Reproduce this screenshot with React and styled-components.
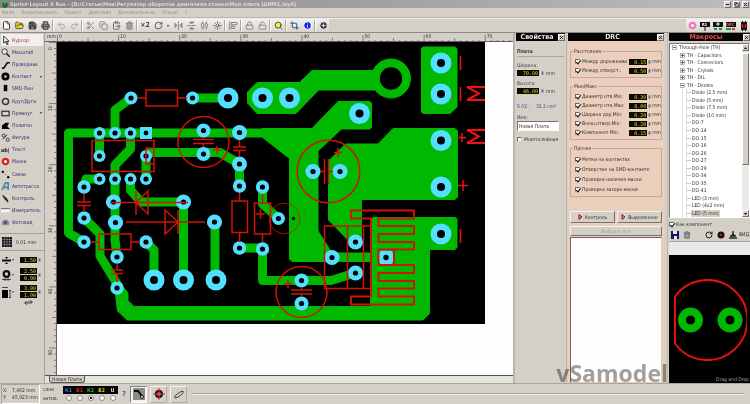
import React, { useState } from 'react';
import styled, { createGlobalStyle } from 'styled-components';
import {
  File, FolderOpen, Save, Printer, Undo2, Redo2, Scissors, Copy, ClipboardPaste, Trash2,
  RotateCw, FlipHorizontal2, FlipVertical2, AlignHorizontalDistributeCenter, Sun, AlignStartVertical,
  Lock, Unlock, Search, Crop, Info, CirclePlus, Minus, X,
} from 'lucide-react';

const GlobalStyle = createGlobalStyle`
  * {
    box-sizing: border-box;
  }
  body {
    margin: 0;
    background: #d4d0c8;
    color: #33302e;
    font-family: 'DejaVu Sans Condensed', 'DejaVu Sans', sans-serif;
    font-size: 5px;
    line-height: 7px;
  }
  button, input {
    font: inherit;
    color: inherit;
    margin: 0;
    padding: 0;
  }
  svg {
    display: block;
    flex: none;
  }
`;

const Window = styled.div`
  display: flex;
  flex-direction: column;
  min-height: 100vh;
  background: #d4d0c8;
`;

const TitleBar = styled.header`
  display: flex;
  align-items: center;
  gap: 2px;
  height: 8px;
  padding: 0 1px 0 2px;
  background: linear-gradient(90deg, #858585, #bdbdbd);
  color: #dedbd5;
  font-weight: bold;
`;

const Title = styled.h1`
  flex: 1;
  margin: 0;
  font-family: 'DejaVu Sans', sans-serif;
  font-size: 5px;
  white-space: nowrap;
  overflow: hidden;
`;

const SmallButton = styled.button`
  display: flex;
  align-items: center;
  justify-content: center;
  width: 7px;
  height: 7px;
  border: 1px solid;
  border-color: #fff #706d68 #706d68 #fff;
  background: #d4d0c8;
  color: #111;
`;

const MenuBar = styled.nav`
  display: flex;
  align-items: center;
  gap: 7px;
  height: 10px;
  padding-left: 2px;
  border-bottom: 1px solid #bbb7ae;

  a {
    color: #918e88;
    text-decoration: none;
  }
`;

const ToolBar = styled.div`
  display: flex;
  align-items: center;
  justify-content: space-between;
  height: 15px;
  border-top: 1px solid #eeece8;
  border-bottom: 1px solid #8d8a84;
`;

const ToolGroup = styled.div`
  display: flex;
  align-items: center;
  gap: 1px;
  height: 13px;
  background: linear-gradient(#f2f1ee, #d8d4cd);
`;

const ToolButton = styled.button`
  display: flex;
  align-items: center;
  justify-content: center;
  width: ${(props) => (props.$narrow ? '6px' : '12px')};
  height: 12px;
  border: 0;
  background: none;
  color: ${(props) => props.$color || '#8b8883'};
  font-size: 7px;
  font-weight: bold;
`;

const ToolSeparator = styled.span`
  width: 2px;
  height: 11px;
  border-left: 1px solid #a9a59d;
  border-right: 1px solid #fff;
`;

const Workspace = styled.main`
  position: relative;
  display: grid;
  grid-template-columns: 45px minmax(0, 1fr) 52px 101px 83px;
  flex: 1;
`;

const SideBar = styled.aside`
  display: flex;
  flex-direction: column;
  border-right: 1px solid #a5a199;
`;

const ModeList = styled.div`
  display: grid;
  grid-auto-rows: 1fr;
  height: 196px;
  padding: 1px 1px 0;
`;

const ModeButton = styled.button`
  display: flex;
  align-items: center;
  gap: 2px;
  padding-left: 0;
  border: 0;
  background: ${(props) => (props.$active ? '#f1efec' : 'none')};
  color: ${(props) => (props.$active ? '#9b2424' : '#2a2a78')};
  text-align: left;

  span {
    flex: 1;
    white-space: nowrap;
  }
`;

const Arrow = styled.i`
  width: 0;
  margin-right: 1px;
  border: 1px solid transparent;
  border-top: 2px solid ${(props) => props.$color || '#222'};
  border-bottom: 0;
`;

const GridRow = styled.div`
  display: flex;
  align-items: center;
  gap: 4px;
  height: 18px;
  margin-top: 4px;
  padding-left: 2px;
  border-top: 1px solid #a5a199;
  border-bottom: 1px solid #a5a199;
`;

const SizeRow = styled.div`
  display: flex;
  align-items: center;
  gap: 1px;
  height: ${(props) => (props.$pair ? '17px' : '12px')};
  margin-top: ${(props) => (props.$pair ? '0' : '3px')};
  padding-left: 2px;
`;

const Stack = styled.div`
  display: flex;
  flex-direction: column;
  gap: 1px;
  margin-left: 4px;
`;

const Unit = styled.span`
  width: 3px;
  height: 4px;
  background: #64657c;
  border: 1px solid #a9a7a9;
`;

const NumberField = styled.input`
  width: ${(props) => props.$width || '17px'};
  height: 6px;
  padding-right: 1px;
  border: 0;
  background: #0b0b05;
  color: #dada28;
  font-family: 'DejaVu Sans Mono', monospace;
  font-size: 5px;
  line-height: 6px;
  text-align: right;
`;

const CanvasArea = styled.section`
  display: grid;
  grid-template-columns: 12px minmax(0, 1fr);
  grid-template-rows: 9px minmax(0, 1fr) 8px;
  overflow: hidden;
  border-right: 1px solid #b5b2ab;
`;

const RulerCorner = styled.span`
  padding-left: 2px;
  border-bottom: 1px solid #66645f;
`;

const RulerBox = styled.div`
  overflow: hidden;
  border-bottom: ${(props) => (props.$side ? '0' : '1px solid #66645f')};
  border-right: ${(props) => (props.$side ? '1px solid #66645f' : '0')};
`;

const Sheet = styled.div`
  overflow: hidden;
  background: #fefefe;
`;

const TabRow = styled.div`
  grid-column: 1 / 3;
  display: flex;
  padding-left: 4px;
  border-top: 1px solid #55534f;
  background: #e5e3de;
`;

const Tab = styled.button`
  height: 7px;
  padding: 0 2px;
  border: 1px solid #55534f;
  border-top: 0;
  border-radius: 0 0 3px 3px;
  background: #d4d0c8;
  line-height: 5px;
  white-space: nowrap;
`;

const Panel = styled.section`
  display: flex;
  flex-direction: column;
  min-width: 0;
  padding: 0 ${(props) => props.$right || '1px'} 0 1px;
  border-left: 1px solid #bdb8ae;
`;

const PanelHead = styled.header`
  display: flex;
  align-items: center;
  height: 8px;
  margin-bottom: ${(props) => props.$space || '0'};
  background: #050505;
  color: ${(props) => props.$color || '#e6e3e0'};

  h2 {
    flex: 1;
    margin: 0;
    font-size: 7px;
    line-height: 8px;
    text-align: center;
  }
`;

const PropertyForm = styled.form`
  display: flex;
  flex-direction: column;
  padding: 0 1px;

  h3 {
    margin: 7px 0 5px;
    padding-bottom: 1px;
    border-bottom: 1px solid #aaa69e;
    font-size: 5px;
  }
`;

const FieldLabel = styled.label`
  margin-top: ${(props) => props.$top || '0'};
  color: #4a4744;
`;

const FieldRow = styled.div`
  display: flex;
  align-items: center;
  gap: 2px;
  height: 8px;
`;

const Area = styled.p`
  display: flex;
  justify-content: space-between;
  margin: 8px 8px 0 0;
  color: #4545a0;
`;

const TextField = styled.input`
  width: 42px;
  height: 10px;
  padding-left: 1px;
  border: 1px solid;
  border-color: #77736c #fff #fff #77736c;
  background: #fff;
`;

const CheckLabel = styled.label`
  display: flex;
  align-items: center;
  gap: 2px;
  margin-top: ${(props) => props.$top || '0'};
  white-space: nowrap;
`;

const CheckBox = styled.input.attrs({ type: 'checkbox' })`
  appearance: none;
  position: relative;
  flex: none;
  width: 5px;
  height: 5px;
  border: 1px solid;
  border-color: #6a6761 #d4d0c8 #d4d0c8 #6a6761;
  background: #fff;

  &:checked::after {
    content: '';
    position: absolute;
    left: 1px;
    top: -1px;
    width: 2px;
    height: 4px;
    border: solid #111;
    border-width: 0 1px 1px 0;
    transform: rotate(40deg);
  }
`;

const DrcBody = styled.form`
  display: flex;
  flex-direction: column;
  flex: 1;
  padding: 7px 2px 0;
  background: #ebcfbc;
`;

const Group = styled.fieldset`
  display: flex;
  flex-direction: column;
  gap: 2px;
  margin: 0 0 ${(props) => props.$gap || '5px'};
  padding: 3px 0 3px 4px;
  border: 1px solid #c3ab9c;
  min-width: 0;

  legend {
    margin-left: -2px;
    padding: 0 1px;
  }
`;

const RuleRow = styled.div`
  display: flex;
  align-items: center;
  gap: 1px;
  height: ${(props) => (props.$tall ? '8px' : '7px')};

  > label {
    flex: 1;
  }
`;

const ButtonRow = styled.div`
  display: flex;
  gap: 2px;
  margin-bottom: ${(props) => props.$bottom || '3px'};
`;

const PushButton = styled.button`
  display: flex;
  flex: 1;
  align-items: center;
  justify-content: center;
  gap: 2px;
  height: ${(props) => (props.disabled ? '10px' : '12px')};
  border: 1px solid;
  border-color: #f6f3ee #77736c #77736c #f6f3ee;
  background: #d4d0c8;
  color: ${(props) => (props.disabled ? '#a19e98' : '#33302e')};
  white-space: nowrap;
`;

const ResultList = styled.div`
  flex: 1;
  border: 1px solid;
  border-color: #77625a #e2c9b8 #e2c9b8 #77625a;
  background: #fefefe;
`;

const Watermark = styled.span`
  position: absolute;
  right: 82px;
  bottom: -3px;
  color: #a3a19f;
  font-family: 'Open Sans', sans-serif;
  font-size: 23px;
  font-weight: bold;
  line-height: 26px;
  mix-blend-mode: multiply;
  pointer-events: none;
`;

const TreeBox = styled.div`
  display: flex;
  height: 175px;
  border: 1px solid;
  border-color: #77736c #fff #fff #77736c;
  background: #fff;
`;

const Tree = styled.ul`
  display: grid;
  grid-auto-rows: 1fr;
  flex: 1;
  margin: 0;
  padding: 0 0 0 2px;
  list-style: none;
`;

const TreeItem = styled.li`
  display: flex;
  align-items: center;
  gap: 1px;
  padding-left: ${(props) => [0, 8, 19][props.$level]}px;
  background: ${(props) => (props.$level === 2
    ? `linear-gradient(#c9c9c9, #c9c9c9) 14px 50% / 5px 1px no-repeat,
       linear-gradient(#dcdcdc, #dcdcdc) 14px 0 / 1px 100% no-repeat,
       linear-gradient(#e2e2e2, #e2e2e2) 10px 0 / 1px 100% no-repeat`
    : 'none')};
  white-space: nowrap;

  span {
    padding: 0 1px;
    background: ${(props) => (props.$selected ? '#d4d0c8' : 'none')};
  }
`;

const ScrollBar = styled.div`
  display: flex;
  flex-direction: column;
  justify-content: space-between;
  width: 7px;
  background: #ebe9e5;
`;

const Thumb = styled.div`
  height: 112px;
  margin: 2px 0 auto;
  border: 1px solid;
  border-color: #fff #77736c #77736c #fff;
  background: #d4d0c8;
`;

const MacroTools = styled.div`
  display: flex;
  align-items: center;
  height: 13px;
  padding-right: 1px;

  ${ToolButton}:nth-child(3) {
    margin-left: auto;
  }
`;

const MacroFilter = styled.div`
  height: 14px;
  border-top: 1px solid #aaa69e;
  background: #e8e8e8;
`;

const Preview = styled.div`
  display: flex;
  flex: 1;
  flex-direction: column;
  align-items: center;
  justify-content: space-between;
  padding-top: 24px;
  background: #000;

  p {
    align-self: flex-end;
    margin: 0 1px 0 0;
    color: #a8a8a8;
  }
`;

const StatusBar = styled.footer`
  display: flex;
  align-items: center;
  gap: 3px;
  height: 21px;
  padding: 1px;
  border-top: 1px solid #aaa69e;
`;

const Coordinates = styled.dl`
  display: grid;
  grid-template-columns: auto auto;
  justify-content: space-between;
  width: 39px;
  margin: 0;
  padding: 2px 1px;
  border: 1px solid;
  border-color: #a5a199 #fff #fff #a5a199;

  dd {
    margin: 0;
  }
`;

const LayerGrid = styled.div`
  display: grid;
  grid-template-columns: 20px repeat(5, 11px);
  grid-template-rows: 8px 9px;
  align-items: center;
`;

const LayerName = styled.label`
  height: 8px;
  background: #060606;
  color: ${(props) => props.$color};
  font-weight: bold;
  line-height: 8px;
  text-align: center;
`;

const LayerRadio = styled.input.attrs({ type: 'radio' })`
  appearance: none;
  justify-self: center;
  width: 6px;
  height: 6px;
  border: 1px solid #8c8982;
  border-radius: 50%;
  background: #fff;

  &:checked {
    background: radial-gradient(#111 1px, #fff 1px);
  }
`;

const StatusButton = styled.button`
  display: flex;
  align-items: center;
  justify-content: center;
  width: 17px;
  height: 17px;
  border: 1px solid;
  border-color: ${(props) => (props.$pressed ? '#858179 #fff #fff #858179' : '#f5f3f0 #b1ada5 #b1ada5 #f5f3f0')};
  background: ${(props) => (props.$pressed ? '#f4f3f0' : '#d4d0c8')};
`;

const StatusLine = styled.span`
  flex: 1;
  height: 2px;
  margin: 0 4px 0 1px;
  border-top: 1px solid #aaa69e;
  border-bottom: 1px solid #efedea;
`;

const modeIcons = {
  cursor: <path d="M3 0v8l2-2 2 4 1-1-2-3h3z" fill="#fff" stroke="#222" />,
  zoom: <><circle cx="4" cy="4" r="3" fill="#e8e8f2" stroke="#333" /><path d="M6 6l4 4" stroke="#222" strokeWidth="1.6" /></>,
  track: <path d="M1 9h2l4-6h3" fill="none" stroke="#111" strokeWidth="1.8" />,
  pad: <circle cx="5" cy="5" r="3" fill="none" stroke="#050505" strokeWidth="3" />,
  smd: <rect x="3" y="1" width="4" height="7" fill="#050505" />,
  circle: <circle cx="5" cy="5" r="3.4" fill="none" stroke="#333" strokeWidth="1.6" />,
  rect: <rect x="1" y="2.500" width="8" height="5" fill="none" stroke="#333" strokeWidth="1.4" />,
  polygon: <path d="M1 9V5l4-3h4L7 6l3 3z" fill="#050505" />,
  figure: <><circle cx="3" cy="3" r="1.700" fill="none" stroke="#333" /><circle cx="7.500" cy="7.500" r="1.800" fill="none" stroke="#333" /><path d="M2 7l5-5" stroke="#333" /></>,
  mask: <><circle cx="5" cy="5" r="3" fill="#fff" stroke="#e0201c" strokeWidth="2.600" /></>,
  links: <><path d="M2 2l6 6" stroke="#777" strokeDasharray="1 1" /><circle cx="2" cy="2" r="1.300" /><circle cx="8" cy="8" r="1.300" /></>,
  auto: <path d="M1 9L5 1h3v8M3 6h5" fill="none" stroke="#4b87a9" strokeWidth="1.800" />,
  probe: <path d="M2 1l2 4 4 4M2 2l4 3 2 4" fill="#222" stroke="#222" strokeWidth="1.200" />,
  measure: <><rect x="0" y="3" width="10" height="4" fill="#f5f5f5" /><path d="M0 3h10" stroke="#555" /></>,
  photo: <><path d="M1 4l2-2h4l2 2v4H1z" fill="#8d8fa5" /><circle cx="5" cy="5" r="2" fill="#555878" /></>,
};

const modes = [
  ['cursor', 'Курсор'], ['zoom', 'Масштаб'], ['track', 'Проводник'], ['pad', 'Контакт', true],
  ['smd', 'SMD-Пин'], ['circle', 'Круг/Дуга'], ['rect', 'Прямоуг.', true], ['polygon', 'Полигон'],
  ['figure', 'Фигура'], ['text', 'Текст'], ['mask', 'Маска'], ['links', 'Связи'],
  ['auto', 'Автотрасса'], ['probe', 'Контроль'], ['measure', 'Измеритель'], ['photo', 'Фотовид'],
];

const ModeIcon = ({ name }) => (
  <svg width="9" height="9" viewBox="0 0 10 10">
    {name === 'text'
      ? <text x="0" y="8" fontSize="6" fontWeight="bold" fill="#222">ab|</text>
      : modeIcons[name]}
  </svg>
);

const mainTools = [
  { name: 'Новый', icon: File, color: '#333', fill: '#fff' },
  { name: 'Открыть', icon: FolderOpen, color: '#55501a', fill: '#e5d648' },
  { name: 'Сохранить', icon: Save, color: '#222', fill: '#77777c' },
  { name: 'Печать', icon: Printer, color: '#333', fill: '#96968a' },
  null,
  { name: 'Отменить', icon: Undo2, color: '#aaa7a1' },
  { name: 'Вернуть', icon: Redo2, color: '#aaa7a1' },
  null,
  { name: 'Вырезать', icon: Scissors },
  { name: 'Копировать', icon: Copy },
  { name: 'Вставить', icon: ClipboardPaste, color: '#66635f' },
  { name: 'Удалить', icon: Trash2, fill: '#a5a29d' },
  null,
  { name: 'Дублировать', text: '×2', color: '#444' },
  { name: 'Повернуть', icon: RotateCw, color: '#555' },
  { name: 'Угол', arrow: true },
  { name: 'Отразить по горизонтали', icon: FlipHorizontal2, color: '#666' },
  { name: 'Отразить по вертикали', icon: FlipVertical2, color: '#666' },
  { name: 'Выровнять', icon: AlignHorizontalDistributeCenter },
  { name: 'Привязка', icon: Sun, color: '#555' },
  null,
  { name: 'По краю', icon: AlignStartVertical, color: '#777' },
  null,
  { name: 'Группировать', icon: Lock },
  { name: 'Разгруппировать', icon: Unlock },
  null,
  { name: 'Масштаб', icon: Search, color: '#444', fill: '#f1ed4c' },
  null,
  { name: 'Обновить', icon: Crop, color: '#17577b' },
  { name: 'Сведения', icon: Info, color: '#fff', fill: '#0b22e0' },
  null,
  { name: 'Добавить', icon: CirclePlus, color: '#e5e5e5', fill: '#3c3c3c' },
];

const layers = [
  ['К1', '#3b78e8'], ['В1', '#e02020'], ['К2', '#22bd22'], ['В2', '#d6cf22'], ['U', '#f3f3f3'],
];

const macros = [
  [0, 'Through-Hole (TH)', '-'], [1, 'TH - Capacitors', '+'], [1, 'TH - Connectors', '+'],
  [1, 'TH - Crytals', '+'], [1, 'TH - DIL', '+'], [1, 'TH - Diodes', '-'],
  [2, 'Diode (2,5 mm)'], [2, 'Diode (5 mm)'], [2, 'Diode (7,5 mm)'], [2, 'Diode (10 mm)'],
  [2, 'DO-7'], [2, 'DO-14'], [2, 'DO-15'], [2, 'DO-16'], [2, 'DO-26'], [2, 'DO-27'], [2, 'DO-29'],
  [2, 'DO-34'], [2, 'DO-35'], [2, 'DO-41'], [2, 'LED (3 mm)'], [2, 'LED (4x2 mm)'], [2, 'LED (5 mm)'],
];

const distances = [['Между дорожками', '0.15'], ['Между отверст.:', '0.50']];
const limits = [
  ['Диаметр отв.Min:', '0.30'], ['Диаметр отв.Max:', '8.00'], ['Ширина дор.Min:', '0.20'],
  ['Внеш.отвер.Min:', '0.20'], ['Компонент Min:', '0.15'],
];
const checks = ['Метки на контактах', 'Отверстие на SMD-контакте', 'Проверка наличия маски', 'Проверка зазора маски'];

// x, y, outer radius
const pads = [
  [131, 98, 6.5], [192.5, 98, 6.5], [228, 98, 10.5], [262.5, 98, 10.5], [289.5, 98, 10.5], [359.5, 113.5, 10.5],
  [99.5, 133, 6], [115, 133, 6], [130.5, 133, 6], [99.5, 156, 6], [146, 156, 6],
  [99.5, 179, 6], [115, 179, 6], [130.5, 179, 6], [146, 179, 6],
  [84, 187, 6.7], [84, 218, 6.7], [84, 242, 6.7], [146, 242, 6.7],
  [113.5, 202, 7.6], [183.5, 202, 7.6], [115.5, 222.5, 7.6], [214.5, 222, 7.6],
  [117, 257, 6.7], [117, 288, 6.7], [154, 280, 10.5], [183.5, 280, 10.5], [216, 280, 10.5],
  [203.5, 130.5, 7], [203.5, 154, 7], [239.5, 132.5, 7.5], [239.5, 164, 7.5], [239.5, 186, 6.7],
  [239.5, 248, 6.7], [262.5, 187, 6.7], [278.5, 218.5, 6.5], [262.5, 249, 6.7],
  [441, 63, 10.5], [441, 94, 10.5], [441, 140.5, 10.5], [441, 187, 10.5], [441, 234, 10.5],
  [313, 171.5, 7.6], [340, 171.5, 7.6], [355.5, 242, 7.6], [332, 257.5, 7.6], [355.5, 273, 7.6],
  [301.5, 280.5, 7], [301.5, 303.5, 7],
];

const Board = () => (
  <svg width="428" height="282" viewBox="57 42 428 282" role="img" aria-label="Плата">
    <rect x="57" y="42" width="428" height="282" fill="#000" />
    {/* copper fills */}
    <g fill="#00b800" stroke="#00b800" strokeLinejoin="round">
      <path d="M257 82.500H299.500L312 70.500H391V90H318.500L296 113.500H257L247.500 103V92z" />
      <circle cx="391" cy="78.500" r="19.500" />
      <path d="M423 47H455L457 49V107L450 113.500H423L421.500 112V49z" />
      <path d="M262 128.500H312L338 101.500H370L371.500 103V127L370 129H341.500L318 151V231L332 253H371V261.500H292L289.500 259V158.500L262 137z" />
      <path d="M328.500 161L345.500 144H378L393 128.500H455L457.500 131V197L455 199.500H361.500V242H350L328.500 220z" />
      <path d="M115 290L117.500 311L127 320H423L429.500 313.500V249.500H455L457 247.500V219L455 217.500H373L370.500 220V306.500H134L128 300.500V293L121 284z" />
    </g>
    <g fill="none" stroke="#00b800" strokeWidth="9" strokeLinejoin="round">
      <path d="M131 98L115 110V133" />
      <path d="M270 133H68.500V233L84 242" />
      <path d="M99.500 133V156M130.500 133V149L115 165V240L117 257" />
      <path d="M146 179V156L150 152.500H220L239.500 164V186" />
      <path d="M99.500 179H86L84 187M130.500 179V190L141 202H183.500V280" />
      <path d="M84 218L100 234V256L119 287" />
      <path d="M146 242L154 250V280M215 222V280M192 98H228" />
      <path d="M262.500 187V204L278 218M239.500 248H262.500V280.500H331L355 273" />
    </g>
    <circle cx="391" cy="78.500" r="11.200" />
    <circle cx="293.500" cy="218.500" r="1.800" />
    {/* pads */}
    <rect x="140" y="127" width="12" height="12" fill="#55dfff" />
    <circle cx="146" cy="133" r="2.400" />
    <rect x="379" y="250.500" width="14" height="14" rx="4" fill="#55dfff" />
    <circle cx="386" cy="257.500" r="2.700" />
    {pads.map(([x, y, r]) => (
      <g key={`${x}-${y}`}>
        <circle cx={x} cy={y} r={r} fill="#55dfff" />
        <circle cx={x} cy={y} r={r > 10 ? 4 : 2.6} />
      </g>
    ))}
    {/* silkscreen */}
    <g fill="none" stroke="#d11208" strokeWidth="1.500">
      <path d="M137 98H146M178 98H187M146 90H177.500V106H146z" />
      <path d="M92 140.500H154V171.500H92zM154 148H146V164H154" />
      <path d="M84 194V202M77 202H91M77 205.500H91M84 205.500V212" />
      <path d="M110 202.500H188M148 191V214L136 202.500zM136 191V215" />
      <path d="M126 222H205M165 210V234L178 222zM178 210V234" />
      <path d="M91 242H99M131 242H140M99 234H131V249.500H99z" />
      <path d="M117 264V270M111 270H123M111 273.500H123M117 273.500V282" />
      <circle cx="203.500" cy="142" r="25.500" />
      <path d="M203.500 137V139.500M193 139.500H214M193 143.500H214M203.500 143.500V147M213 150H221M217 146V154" />
      <path d="M239.500 140V147M233 147H246M233 150.500H246M239.500 150.500V157" />
      <path d="M239.500 193V201M232 201H247.500V232.500H232zM239.500 233V242" />
      <path d="M262.500 194V203M254.500 203H270.500V234H254.500zM262.500 234V242M256 214H265M260.500 209V219" />
      <circle cx="284.500" cy="218.500" r="15.300" strokeWidth="0.800" />
      <path d="M304.500 210V224" strokeWidth="0.600" strokeDasharray="1 4" />
      <circle cx="328.500" cy="171.500" r="31.300" />
      <path d="M320 171.500H324.500M324.500 159V184M328.500 159V184M328.500 171.500H333M334 152.500H342M338 148V157" />
      <circle cx="301.500" cy="292" r="25.500" />
      <path d="M301.500 287V290M291 290H312M291 294H312M301.500 294V297M284 284H292M288 280V288" />
      <path d="M324.500 226H371M324.500 226V288.500H371M347.500 226V288.500M363.500 226V288.500" />
      <path
        strokeWidth="1.900"
        d="M351 210.500H414V218.500H378.500V226H414V234H378.500V242H414V249.500H378.500V265H414V273H378.500V281H414V288.500H378.500V296.500H414V304.500H351V296.500H371V218.500H351zM394 250V265"
      />
    </g>
    <g fill="none" stroke="#f01212" strokeWidth="1.500">
      <path d="M460.500 56V70M460.500 87V101M460.500 229V243M458 185.500H468M463 180V191M457 137.500H466M462 133V142" />
      <path d="M485 87H467L479 93.500L467 100H485M485 130H467L479 136.500L467 143H485" strokeWidth="2" />
    </g>
  </svg>
);

// one millimetre of the board is a little over six pixels
const STEP = 6.11;
const tickLength = (i) => {
  if (i % 10 === 0) return 7;
  return i % 5 === 0 ? 4 : 2;
};

const TopRuler = () => (
  <svg width="460" height="9" viewBox="0 0 460 9">
    {Array.from({ length: 75 }, (_, i) => (
      <g key={i}>
        <path d={`M${i * STEP + 0.5} 9v-${tickLength(i)}`} stroke="#66645f" strokeWidth="0.8" />
        {i % 10 === 0 && <text x={i * STEP + 2} y="5" fontSize="5" fill="#33302e">{i}</text>}
      </g>
    ))}
  </svg>
);

const SideRuler = () => (
  <svg width="11" height="333" viewBox="0 0 11 333">
    {Array.from({ length: 55 }, (_, i) => (
      <g key={i}>
        <path d={`M11 ${i * STEP + 0.5}h-${tickLength(i)}`} stroke="#66645f" strokeWidth="0.8" />
        {i % 10 === 0 && (
          <text transform={`translate(7 ${i * STEP + 8}) rotate(-90)`} fontSize="5" fill="#33302e">{i}</text>
        )}
      </g>
    ))}
  </svg>
);

const TreeToggle = ({ sign }) => (
  <svg width="5" height="5" viewBox="0 0 5 5">
    <rect x="0.500" y="0.500" width="4" height="4" fill="#fff" stroke="#999" strokeWidth="0.700" />
    <path d={sign === '+' ? 'M1 2.500h3M2.500 1v3' : 'M1 2.500h3'} stroke="#333" strokeWidth="0.700" />
  </svg>
);

const PlayIcon = () => (
  <svg width="5" height="6" viewBox="0 0 5 6">
    <path d="M1 0.500L4 3L1 5.500z" fill="#d87770" stroke="#9a2020" />
  </svg>
);

const CloseButton = () => (
  <SmallButton type="button" aria-label="Закрыть"><X size={5} strokeWidth={4} /></SmallButton>
);

const RuleField = ({ label, value }) => (
  <RuleRow>
    <CheckLabel><CheckBox defaultChecked /><span>{label}</span></CheckLabel>
    <NumberField $width="18px" defaultValue={value} aria-label={label} />
    <Unit />
    <span>mm</span>
  </RuleRow>
);

const PanelTools = () => (
  <ToolGroup>
    <ToolButton aria-label="Прозрачность">
      <svg width="9" height="9" viewBox="0 0 10 10"><circle cx="5" cy="5" r="3" fill="#fff" stroke="#ed76c0" strokeWidth="2.500" /></svg>
    </ToolButton>
    <ToolButton aria-label="Свойства">
      <svg width="10" height="10" viewBox="0 0 10 10">
        <path d="M0 1h10v5H0zM4.500 6h1v4h-1z" fill="#111" /><text x="2" y="5" fontSize="4" fontWeight="bold" fill="#fff">R1</text>
      </svg>
    </ToolButton>
    <ToolButton aria-label="Выбор">
      <svg width="10" height="10" viewBox="0 0 10 10">
        <path d="M0 1h10v5H0z" fill="#111" /><path d="M5 1v4M3 3h4" stroke="#eee" /><path d="M1 7h3v2H1zM6 7h3v2H6z" fill="#159735" />
      </svg>
    </ToolButton>
    <ToolButton aria-label="Проверка DRC">
      <svg width="10" height="10" viewBox="0 0 10 10">
        <path d="M0 1h10v5H0z" fill="#111" /><text x="0" y="5" fontSize="4" fontWeight="bold" fill="#f25d5d">DRC</text>
        <path d="M0 8h5" stroke="#159735" strokeWidth="2" /><path d="M6 7l3 2M9 7l-3 2" stroke="#b13030" />
      </svg>
    </ToolButton>
    <ToolButton aria-label="Макросы">
      <svg width="8" height="10" viewBox="0 0 8 10">
        <path d="M1 1h6v8H1z" fill="#111" /><path d="M2.500 3v4M5.500 3v4M2.500 5h3" stroke="#e51717" /><path d="M2 0h1v1H2zM5 0h1v1H5zM2 9h1v1H2zM5 9h1v1H5z" />
      </svg>
    </ToolButton>
  </ToolGroup>
);

const PropertiesPanel = () => (
  <Panel>
    <PanelHead><h2>Свойства</h2><CloseButton /></PanelHead>
    <PropertyForm>
      <h3>Плата</h3>
      <FieldLabel htmlFor="board-width">Ширина:</FieldLabel>
      <FieldRow><NumberField id="board-width" $width="22px" defaultValue="70.00" /><Unit /><span>mm</span></FieldRow>
      <FieldLabel $top="3px" htmlFor="board-height">Высота:</FieldLabel>
      <FieldRow><NumberField id="board-height" $width="22px" defaultValue="46.00" /><Unit /><span>mm</span></FieldRow>
      <Area><span>S ñ2 :</span><span>32,2 cm²</span></Area>
      <FieldLabel $top="4px" htmlFor="board-name">Имя:</FieldLabel>
      <TextField id="board-name" defaultValue="Новая Плата" />
      <CheckLabel $top="5px"><CheckBox /><span>Многослойная</span></CheckLabel>
    </PropertyForm>
  </Panel>
);

const DrcPanel = () => (
  <Panel $right="3px">
    <PanelHead><h2>DRC</h2><CloseButton /></PanelHead>
    <DrcBody>
      <Group>
        <legend>Расстояния</legend>
        {distances.map(([label, value]) => <RuleField key={label} label={label} value={value} />)}
      </Group>
      <Group>
        <legend>Мин/Макс</legend>
        {limits.map(([label, value]) => <RuleField key={label} label={label} value={value} />)}
      </Group>
      <Group $gap="14px">
        <legend>Прочее</legend>
        {checks.map((label) => (
          <RuleRow key={label} $tall>
            <CheckLabel><CheckBox defaultChecked /><span>{label}</span></CheckLabel>
          </RuleRow>
        ))}
      </Group>
      <ButtonRow>
        <PushButton type="button"><PlayIcon />Контроль</PushButton>
        <PushButton type="button"><PlayIcon />Выделенное</PushButton>
      </ButtonRow>
      <ButtonRow $bottom="1px"><PushButton type="button" disabled>Выбрать всё</PushButton></ButtonRow>
      <ResultList />
    </DrcBody>
  </Panel>
);

const MacrosPanel = () => {
  const [selected, setSelected] = useState('LED (5 mm)');

  return (
    <Panel $right="0">
      <PanelHead $color="#ea4848" $space="2px"><h2>Макросы</h2><CloseButton /></PanelHead>
      <TreeBox>
        <Tree>
          {macros.map(([level, name, sign]) => (
            <TreeItem key={name} $level={level} $selected={name === selected} onClick={() => setSelected(name)}>
              {sign && <TreeToggle sign={sign} />}
              <span>{name}</span>
            </TreeItem>
          ))}
        </Tree>
        <ScrollBar>
          <SmallButton type="button" aria-label="Вверх">
            <svg width="3" height="2" viewBox="0 0 3 2"><path d="M0 2h3L1.500 0z" /></svg>
          </SmallButton>
          <Thumb />
          <SmallButton type="button" aria-label="Вниз">
            <svg width="3" height="2" viewBox="0 0 3 2"><path d="M0 0h3L1.500 2z" /></svg>
          </SmallButton>
        </ScrollBar>
      </TreeBox>
      <CheckLabel $top="3px"><CheckBox defaultChecked /><span>Как компонент</span></CheckLabel>
      <MacroTools>
        <ToolButton aria-label="Сохранить макрос">
          <svg width="8" height="8" viewBox="0 0 8 8"><path d="M0 0h8v8H0z" fill="#18185e" /><path d="M2 0h4v3H2zM3 5h3v3H3z" fill="#e8e8f4" /></svg>
        </ToolButton>
        <ToolButton $color="#555" aria-label="Удалить макрос"><Trash2 size={8} fill="#999" /></ToolButton>
        <ToolButton $color="#222" aria-label="Повернуть макрос"><RotateCw size={8} strokeWidth={3} /></ToolButton>
        <ToolButton aria-label="Слой макроса">
          <svg width="8" height="8" viewBox="0 0 8 8"><circle cx="4" cy="4" r="3.500" fill="#161010" /><circle cx="4" cy="4" r="1.200" fill="#b22" /></svg>
        </ToolButton>
        <ToolButton aria-label="Разместить">
          <svg width="8" height="8" viewBox="0 0 8 8"><path d="M4 0v4M1 5h6M0 7h8" stroke="#222" strokeWidth="1.400" /><path d="M1.500 5L4 2l2.500 3z" fill="#222" /></svg>
        </ToolButton>
        <span>ВИД</span>
      </MacroTools>
      <MacroFilter />
      <Preview>
        <svg width="74" height="82" viewBox="0 0 74 82" role="img" aria-label="LED (5 mm)">
          <path d="M2 17.500A40 40 0 1 1 2 64.500z" fill="none" stroke="#e51010" strokeWidth="2" />
          <circle cx="17.500" cy="41" r="8.500" fill="none" stroke="#00b800" strokeWidth="8" />
          <circle cx="57" cy="41" r="8.500" fill="none" stroke="#00b800" strokeWidth="8" />
        </svg>
        <p>Drag and Drop</p>
      </Preview>
    </Panel>
  );
};

const App = () => {
  const [mode, setMode] = useState('cursor');
  const [layer, setLayer] = useState('К2');

  return (
    <Window>
      <GlobalStyle />
      <TitleBar>
        <svg width="6" height="7" viewBox="0 0 6 7"><circle cx="3" cy="4" r="2.700" fill="#126b24" /><path d="M3 4V0" stroke="#65bd54" /></svg>
        <Title>Sprint-Layout 6 Rus - [D:\Статьи\Мои\Регулятор оборотов двигателя станка\Моя плата ШИМ1.lay6]</Title>
        <SmallButton aria-label="Свернуть"><Minus size={5} strokeWidth={4} /></SmallButton>
        <SmallButton aria-label="Восстановить"><Copy size={5} strokeWidth={3} /></SmallButton>
        <CloseButton />
      </TitleBar>
      <MenuBar>
        {['Файл', 'Редактировать', 'Проект', 'Действия', 'Дополнительно', 'Опции', '?'].map((item) => (
          <a key={item} href="#menu">{item}</a>
        ))}
      </MenuBar>
      <ToolBar>
        <ToolGroup>
          {mainTools.map((tool, i) => {
            if (!tool) return <ToolSeparator key={i} />;
            const Icon = tool.icon;
            return (
              <ToolButton key={tool.name + i} $color={tool.color} $narrow={tool.arrow} aria-label={tool.name}>
                {Icon && <Icon size={9} strokeWidth={2.5} fill={tool.fill || 'none'} />}
                {tool.text}
                {tool.arrow && <Arrow />}
              </ToolButton>
            );
          })}
        </ToolGroup>
        <PanelTools />
      </ToolBar>

      <Workspace>
        <SideBar>
          <ModeList>
            {modes.map(([name, label, menu]) => (
              <ModeButton key={name} $active={name === mode} onClick={() => setMode(name)}>
                <ModeIcon name={name} />
                <span>{label}</span>
                {menu && <Arrow />}
              </ModeButton>
            ))}
          </ModeList>
          <GridRow>
            <svg width="10" height="10" viewBox="0 0 10 10">
              <rect width="10" height="10" fill="#111" />
              <path d="M2.500 0v10M5 0v10M7.500 0v10M0 2.500h10M0 5h10M0 7.500h10" stroke="#aaa" strokeWidth="0.500" />
            </svg>
            <span>0,01 mm</span>
          </GridRow>
          <SizeRow>
            <svg width="9" height="9" viewBox="0 0 9 9"><path d="M0 4.500h9" stroke="#111" strokeWidth="2" /><path d="M3 1h3L4.500 3zM3 8h3L4.500 6z" /></svg>
            <Arrow $color="#3535c0" />
            <Stack><NumberField defaultValue="1.50" aria-label="Ширина дорожки" /></Stack>
            <Unit />
          </SizeRow>
          <SizeRow $pair>
            <svg width="9" height="12" viewBox="0 0 9 12"><circle cx="4.500" cy="5" r="2.800" fill="none" stroke="#111" strokeWidth="2.200" /><path d="M0 10.500h9M3 9v3M6 9v3" stroke="#222" strokeWidth="0.800" /></svg>
            <Arrow $color="#3535c0" />
            <Stack>
              <NumberField defaultValue="2.50" aria-label="Диаметр контакта" />
              <NumberField defaultValue="0.90" aria-label="Диаметр отверстия" />
            </Stack>
            <Unit />
          </SizeRow>
          <SizeRow $pair>
            <svg width="9" height="12" viewBox="0 0 9 12"><path d="M0 4h6v8H0z" /><path d="M0 1.500h6M8 4v8M7 5l1-1 1 1M7 11l1 1 1-1" fill="none" stroke="#222" strokeWidth="0.800" /></svg>
            <Arrow $color="#3535c0" />
            <Stack>
              <NumberField defaultValue="3.00" aria-label="Ширина SMD" />
              <NumberField defaultValue="1.90" aria-label="Высота SMD" />
            </Stack>
            <Unit />
          </SizeRow>
          <svg width="35" height="5" viewBox="0 0 35 5"><path d="M25 4v-2h6M32 1v2h-6M30 0l2 2M27 5l-2-2" fill="none" stroke="#333" strokeWidth="0.800" /></svg>
        </SideBar>

        <CanvasArea>
          <RulerCorner>mm</RulerCorner>
          <RulerBox><TopRuler /></RulerBox>
          <RulerBox $side><SideRuler /></RulerBox>
          <Sheet><Board /></Sheet>
          <TabRow><Tab>Новая Плата</Tab></TabRow>
        </CanvasArea>

        <PropertiesPanel />
        <DrcPanel />
        <MacrosPanel />
        <Watermark>vSamodel</Watermark>
      </Workspace>

      <StatusBar>
        <Coordinates>
          <dt>X:</dt><dd>7,462 mm</dd>
          <dt>Y:</dt><dd>45,923 mm</dd>
        </Coordinates>
        <LayerGrid>
          <span>слои</span>
          {layers.map(([name, color]) => (
            <LayerName key={name} htmlFor={`layer-${name}`} $color={color}>{name}</LayerName>
          ))}
          <span>актив.</span>
          {layers.map(([name]) => (
            <LayerRadio key={name} id={`layer-${name}`} name="layer" checked={layer === name} onChange={() => setLayer(name)} />
          ))}
        </LayerGrid>
        <ToolButton $narrow $color="#555">?</ToolButton>
        <StatusButton $pressed aria-label="Режим дорожки">
          <svg width="12" height="12" viewBox="0 0 12 12"><rect width="12" height="12" fill="#8b8b8b" /><path d="M1 3h4l4 5" fill="none" stroke="#080808" strokeWidth="2" /><circle cx="9" cy="9" r="1.500" fill="#fff" stroke="#111" /></svg>
        </StatusButton>
        <StatusButton aria-label="Центр">
          <svg width="12" height="12" viewBox="0 0 12 12"><circle cx="6" cy="6" r="3" fill="none" stroke="#221010" strokeWidth="2.400" /><path d="M6 0v12M0 6h12" stroke="#d22" /></svg>
        </StatusButton>
        <StatusButton aria-label="Контур">
          <svg width="12" height="12" viewBox="0 0 12 12"><path d="M3 7l4-3 3-1v2L8 7 5 9 2 10V8z" fill="none" stroke="#444" /></svg>
        </StatusButton>
        <StatusLine />
      </StatusBar>
    </Window>
  );
};

export default App;
